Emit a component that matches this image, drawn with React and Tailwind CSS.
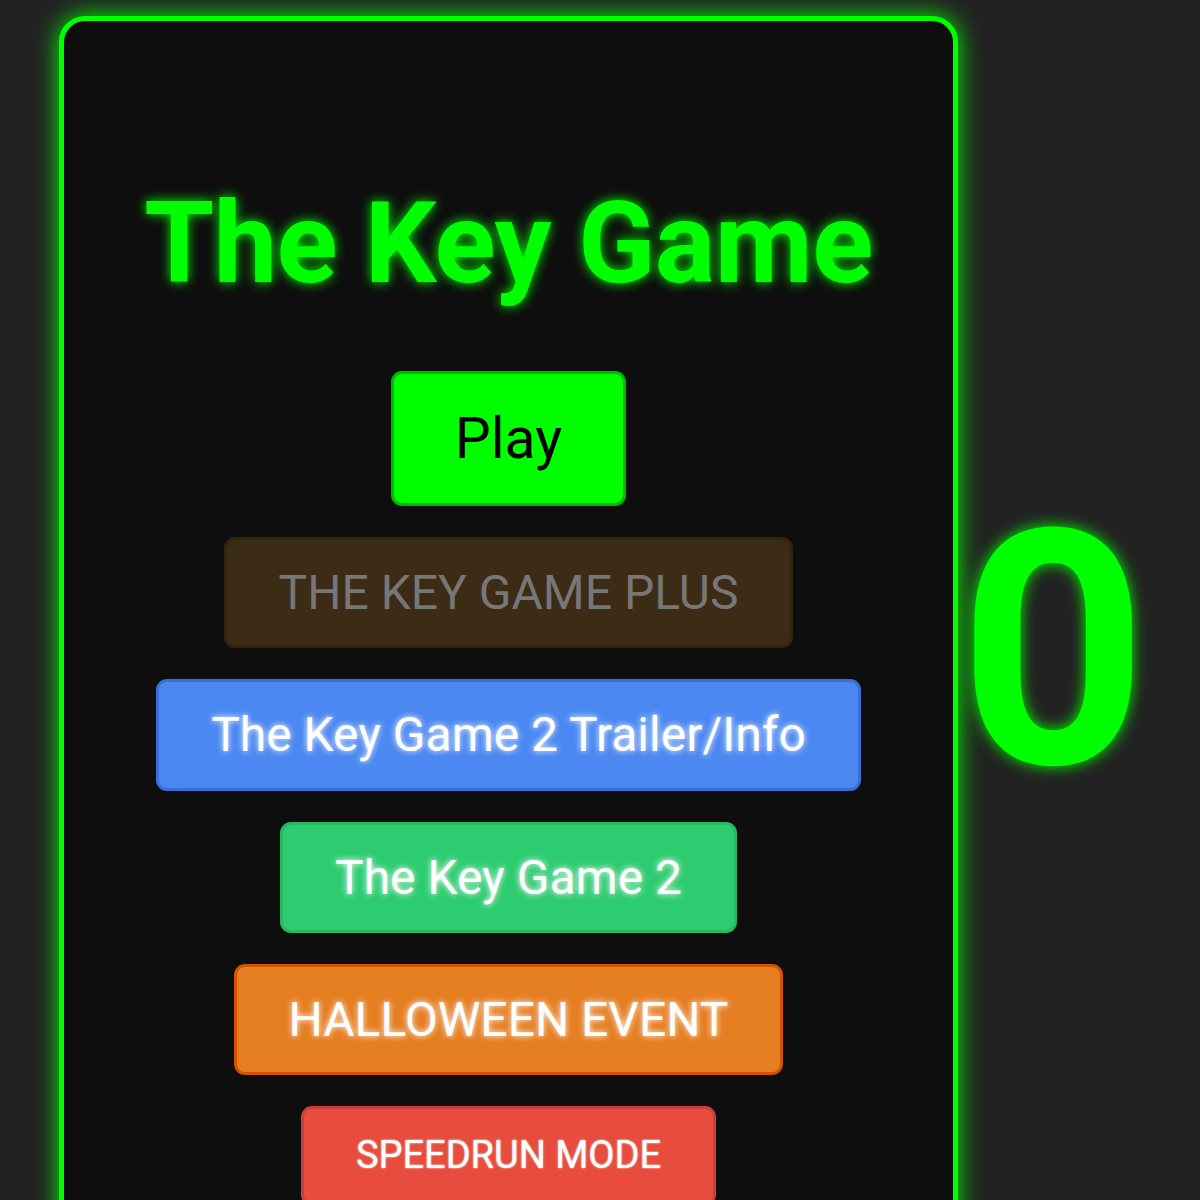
import React from "react";

const btnBase =
  "font-['Roboto',_'Liberation_Sans',_sans-serif] font-normal border-[3px] rounded-[11px] leading-[1.15] whitespace-nowrap";

export default function App() {
  return (
    <div className="min-h-screen w-full overflow-hidden bg-[#222222] flex items-start font-['Roboto',_sans-serif]">
      <div className="ml-[59px] mt-[16px] w-[899px] shrink-0 bg-[#0e0e0e] border-[5px] border-[#00ff00] rounded-[26px] shadow-[0_0_25px_#00ff00] flex flex-col items-center pt-[155px] pb-[80px]">
        <h1 className="text-[113px] leading-[1.2] font-bold text-[#00ff00] [text-shadow:0_0_12px_#00ff00] tracking-[-0.5px]">
          The Key Game
        </h1>

        <div className="flex flex-col items-center gap-[31px] mt-[59px]">
          <button className={`${btnBase} bg-[#00ff00] border-[#00b800] text-black text-[57px] px-[61px] py-[32px] [text-shadow:0_0_6px_#00ff00]`}>
            Play
          </button>
          <button className={`${btnBase} bg-[#3d2c15] border-[#33240f] text-[#777777] text-[48px] px-[52px] py-[25px]`}>
            THE KEY GAME PLUS
          </button>
          <button className={`${btnBase} bg-[#4b88f2] border-[#3a70d6] text-white text-[48px] px-[52px] py-[25px] [text-shadow:0_0_6px_#ffffff]`}>
            The Key Game 2 Trailer/Info
          </button>
          <button className={`${btnBase} bg-[#2ecc71] border-[#27b864] text-white text-[48px] px-[52px] py-[25px] [text-shadow:0_0_6px_#ffffff]`}>
            The Key Game 2
          </button>
          <button className={`${btnBase} bg-[#e67e22] border-[#d35400] text-white text-[48px] px-[52px] py-[25px] [text-shadow:0_0_6px_#ffffff]`}>
            HALLOWEEN EVENT
          </button>
          <button className={`${btnBase} bg-[#e74c3c] border-[#c9403a] text-white text-[38px] px-[52px] py-[25px] [text-shadow:0_0_2px_#ffffff]`}>
            SPEEDRUN MODE
          </button>
        </div>
      </div>

      <div className="mt-[487px] ml-[1px] text-[328px] leading-none font-bold text-[#00ff00] [text-shadow:0_0_15px_#00ff00]">
        0
      </div>
    </div>
  );
}
